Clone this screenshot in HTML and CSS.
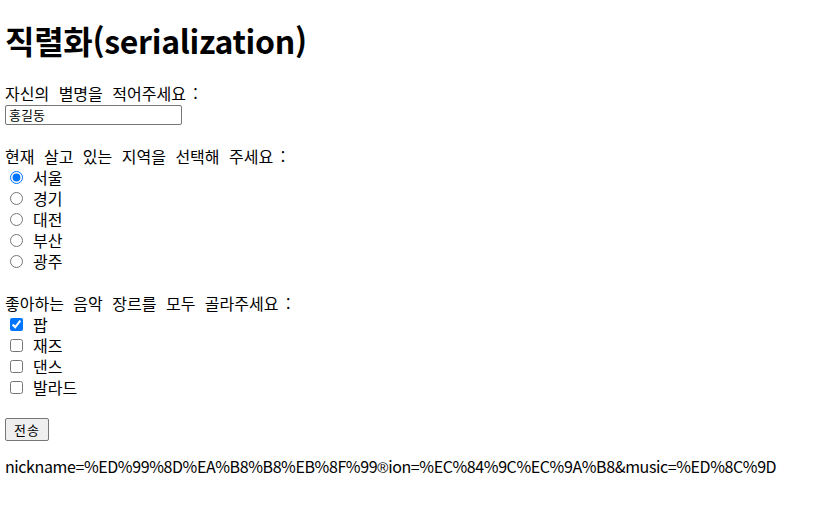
FILE: index.html
```html
<!DOCTYPE html>
<html lang="ko">
<head>
<meta charset="utf-8">
<title>직렬화</title>
<link rel="stylesheet" href="styles.css">
</head>
<body>
<h1 class="title">직렬화(serialization)</h1>
<form class="form">
<div class="line q">자신의 별명을 적어주세요<span class="colon"> :</span></div>
<div class="line"><input class="nick" type="text" name="nickname" value="홍길동"></div>
<div class="line"></div>
<div class="line q">현재 살고 있는 지역을 선택해 주세요<span class="colon"> :</span></div>
<label class="line"><input class="opt" type="radio" name="region" checked>서울</label>
<label class="line"><input class="opt" type="radio" name="region">경기</label>
<label class="line"><input class="opt" type="radio" name="region">대전</label>
<label class="line"><input class="opt" type="radio" name="region">부산</label>
<label class="line"><input class="opt" type="radio" name="region">광주</label>
<div class="line"></div>
<div class="line q">좋아하는 음악 장르를 모두 골라주세요<span class="colon"> :</span></div>
<label class="line"><input class="opt" type="checkbox" name="music" checked>팝</label>
<label class="line"><input class="opt" type="checkbox" name="music">재즈</label>
<label class="line"><input class="opt" type="checkbox" name="music">댄스</label>
<label class="line"><input class="opt" type="checkbox" name="music">발라드</label>
<div class="line"></div>
<div class="line"><button class="send" type="button">전송</button></div>
</form>
<p class="result">nickname=%ED%99%8D%EA%B8%B8%EB%8F%99<span class="reg">®</span>ion=%EC%84%9C%EC%9A%B8&amp;music=%ED%8C%9D</p>
</body>
</html>
```
FILE: styles.css
```css
html, body {
  background: #fff;
}
body {
  margin: 0;
  padding: 0 5px;
  font-family: "Noto Sans CJK KR", "Noto Sans", sans-serif;
  font-size: 16px;
  line-height: 21px;
  color: #000;
}
.title {
  font-size: 32px;
  line-height: 42px;
  font-weight: bold;
  margin: 18px 0 22px 0;
  padding-top: 1px;
  letter-spacing: -0.3px;
}
.form {
  margin: 0;
}
.line {
  height: 21px;
  display: flex;
  align-items: center;
  white-space: pre;
}
.q {
  word-spacing: 5px;
}
.colon {
  word-spacing: 3px;
}
.nick {
  box-sizing: border-box;
  width: 177px;
  height: 20px;
  margin: 0;
  padding: 0 3px;
  font-family: "Noto Sans CJK KR", sans-serif;
  font-size: 13px;
  border: 1px solid #767676;
  border-radius: 2px;
}
.opt {
  width: 13px;
  height: 13px;
  margin: 0 10px 0 5px;
  accent-color: #0075ff;
}
.send {
  box-sizing: border-box;
  height: 23px;
  padding: 0 8px;
  margin: 0;
  font-family: "Noto Sans CJK KR", sans-serif;
  font-size: 13px;
  letter-spacing: 1px;
  background: #efefef;
  border: 1px solid #767676;
  border-radius: 2px;
  color: #000;
}
.result {
  margin: 16px 0;
  line-height: 21px;
  white-space: nowrap;
  letter-spacing: -0.4px;
}
.reg {
  font-family: "Liberation Sans", sans-serif;
  font-size: 15px;
  letter-spacing: 0;
}
```
